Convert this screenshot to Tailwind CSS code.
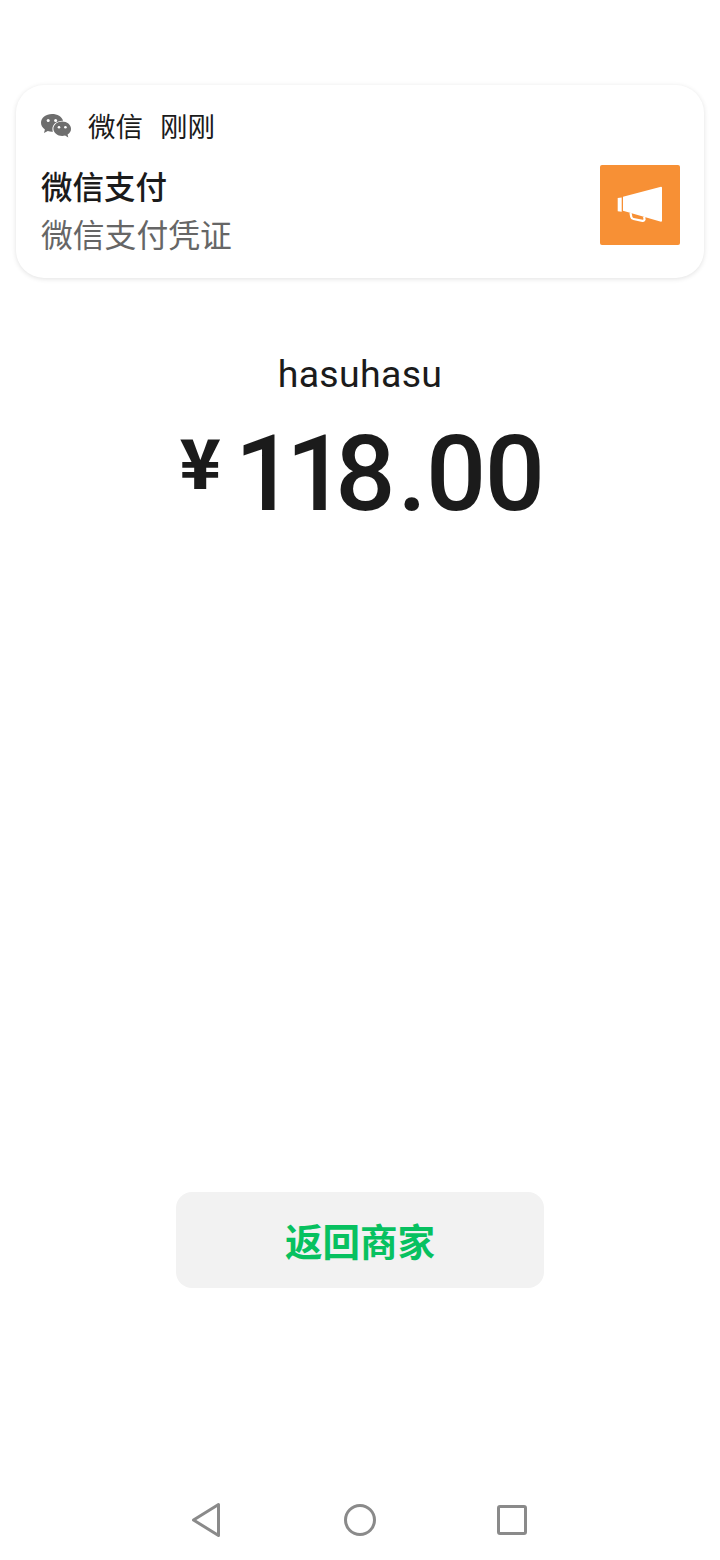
<!DOCTYPE html>
<html lang="zh-CN">
<head>
<meta charset="utf-8">
<script src="https://cdn.jsdelivr.net/npm/@tailwindcss/browser@4"></script>
</head>
<body class="bg-white">
<div class="w-[720px] h-[1560px] flex flex-col items-center bg-white font-['Roboto','Noto_Sans_CJK_SC',sans-serif] text-[#1b1b1b]">
  <div class="mt-[85px] w-[688px] h-[193px] rounded-[28px] bg-white shadow-[0_1px_5px_rgba(0,0,0,0.12)] pl-[25px] pr-[24px] flex items-start justify-between">
    <div class="flex flex-col">
      <div class="flex items-center h-[32px] mt-[26px]">
        <svg class="w-[32px] h-[28px] ml-[-1px] text-[#6e6e6e]" viewBox="0 0 32 28" fill="currentColor" aria-hidden="true">
          <path d="M12 1C5.900 1 1 4.900 1 9.800c0 2.700 1.500 5 3.900 6.700L4 20l3.800-2c1.300.4 2.700.7 4.200.7h.9c-.3-.9-.5-1.800-.5-2.800 0-4.600 4.500-8.200 10-8.200h.7C21.900 3.700 17.400 1 12 1z"/>
          <path d="M31 15.800c0-4-4-7.200-8.800-7.200s-8.800 3.200-8.800 7.200 4 7.200 8.800 7.200c1 0 2-.1 2.900-.4l3.200 1.800-.7-3c2.600-1.500 3.400-3.300 3.400-5.600z"/>
          <circle cx="8.200" cy="7.500" r="1.500" fill="#fff"/><circle cx="15.600" cy="7.500" r="1.500" fill="#fff"/>
          <circle cx="19" cy="14.200" r="1.300" fill="#fff"/><circle cx="25.400" cy="14.200" r="1.300" fill="#fff"/>
        </svg>
        <span class="ml-[16px] mt-[2px] text-[27.500px] leading-[32px]">微信</span>
        <span class="ml-[17px] mt-[2px] text-[27.500px] leading-[32px]">刚刚</span>
      </div>
      <div class="mt-[24px] text-[31.500px] leading-[44px] font-medium">微信支付</div>
      <div class="mt-[3px] text-[31.800px] leading-[44px] text-[#666666]">微信支付凭证</div>
    </div>
    <div class="mt-[80px] w-[80px] h-[80px] rounded-[2px] bg-[#f79035] flex items-center justify-center">
      <svg class="w-[50px] h-[40px]" viewBox="0 0 50 40" fill="none" aria-hidden="true">
        <path d="M2.700 13l4-.5v14.200l-4-.4zM8 11.700L46 1.800a1 1 0 0 1 1 1V35.700a1 1 0 0 1-1 1L8 25.700z" fill="#fff"/>
        <path d="M15.500 28l.8 4a2.500 2.500 0 0 0 2.200 2l9 1.800a1.800 1.800 0 0 0 2-2.300l-.4-1.800" stroke="#fff" stroke-width="2.200"/>
      </svg>
    </div>
  </div>

  <div class="mt-[68px] text-[37.500px] leading-[56px] tracking-[0.3px]">hasuhasu</div>
  <div class="mt-[20px] h-[104px] flex items-start font-medium">
    <span class="text-[68px] leading-[104px] font-['Noto_Sans_CJK_SC',sans-serif] font-black mr-[14px] ml-[3px] mt-[-14px]">¥</span>
    <span class="text-[106px] leading-[104px] whitespace-nowrap"><span class="tracking-[-9px]">11</span><span class="tracking-[-2px] ml-[-2px]">8</span><span class="ml-[4px] mr-[-1px]">.</span><span class="tracking-[-1.500px]">00</span></span>
  </div>

  <div class="mt-[666px] w-[368px] h-[96px] pt-[6px] rounded-[16px] bg-[#f2f2f2] flex items-center justify-center text-[37.500px] font-bold text-[#07c160]">返回商家</div>

  <div class="mt-[212px] w-[336px] h-[40px] flex items-center justify-between">
    <svg class="w-[32px] h-[36px]" viewBox="0 0 32 36" fill="none" stroke="#8a8a8a" stroke-width="3" stroke-linejoin="round" aria-hidden="true">
      <path d="M1.500 18L26.500 2.500v31z"/>
    </svg>
    <svg class="w-[32px] h-[32px]" viewBox="0 0 32 32" fill="none" stroke="#8a8a8a" stroke-width="3" aria-hidden="true">
      <circle cx="16" cy="16" r="14.500"/>
    </svg>
    <svg class="w-[32px] h-[32px]" viewBox="0 0 32 32" fill="none" stroke="#8a8a8a" stroke-width="3" stroke-linejoin="round" aria-hidden="true">
      <rect x="2.500" y="2.500" width="27" height="27" rx="1.500"/>
    </svg>
  </div>
</div>
</body>
</html>
